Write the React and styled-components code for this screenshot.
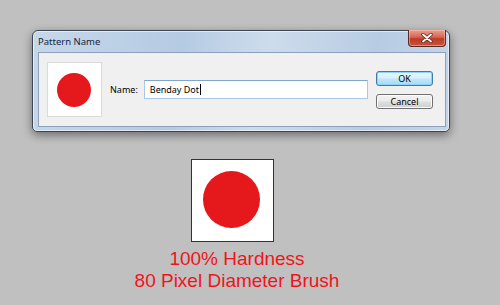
import styled, { createGlobalStyle } from "styled-components";

const GlobalStyle = createGlobalStyle`
  html, body {
    margin: 0;
    padding: 0;
    background: #c0c0c0;
  }
`;

const Page = styled.div`
  width: 500px;
  height: 305px;
  display: flex;
  flex-direction: column;
  overflow: hidden;
`;

// dialog window
const Window = styled.div`
  box-sizing: border-box;
  margin: 30px 0 0 32px;
  width: 418px;
  height: 102px;
  display: flex;
  flex-direction: column;
  padding: 0 3px 4px 5px;
  border: 1px solid #3d4550;
  border-radius: 6px 6px 5px 5px;
  background: linear-gradient(100deg, #c6d7ea 0%, #b5cbe3 35%, #cddcec 55%, #b7cce3 80%, #c3d5e9 100%);
  box-shadow: 0 3px 10px rgba(0, 0, 0, 0.45), inset 0 0 0 1px rgba(255, 255, 255, 0.55);
`;

const TitleBar = styled.div`
  height: 21px;
  display: flex;
  justify-content: space-between;
  align-items: flex-start;
`;

const Title = styled.span`
  margin: 5px 0 0 0;
  font-family: "Noto Sans", sans-serif;
  font-size: 9.5px;
  line-height: 12px;
  color: #16263c;
`;

const CloseButton = styled.div`
  box-sizing: border-box;
  width: 38px;
  height: 17px;
  margin-top: -1px;
  display: flex;
  align-items: center;
  justify-content: center;
  border: 1px solid #5b2a24;
  border-top: none;
  border-radius: 0 0 4px 4px;
  background: linear-gradient(180deg, #e9a292 0%, #d5644f 45%, #bf3a25 55%, #c9543d 100%);
  box-shadow: inset 0 0 0 1px rgba(255, 200, 190, 0.5);
`;

const Client = styled.div`
  flex: 1;
  display: flex;
  align-items: center;
  padding: 0 12px 0 8px;
  background: #f0f0f0;
  border: 1px solid #8da2ba;
`;

const Swatch = styled.div`
  box-sizing: border-box;
  width: ${(p) => p.$size}px;
  height: ${(p) => p.$size}px;
  display: flex;
  align-items: center;
  justify-content: center;
  background: #fff;
  border: ${(p) => p.$border};
`;

const Dot = styled.div`
  width: ${(p) => p.$d}px;
  height: ${(p) => p.$d}px;
  border-radius: 50%;
  background: #e5191c;
  margin: ${(p) => p.$offset || "0"};
`;

const NameRow = styled.div`
  flex: 1;
  display: flex;
  align-items: center;
  gap: 6px;
  margin: 0 8px;
`;

const Label = styled.label`
  font-family: "Noto Sans", sans-serif;
  font-size: 9px;
  color: #000;
`;

const Input = styled.div`
  box-sizing: border-box;
  flex: 1;
  height: 19px;
  display: flex;
  align-items: center;
  padding-left: 5px;
  background: #fff;
  border: 1px solid #a9c7e6;
  border-top-color: #7fa6cf;
  font-family: "Noto Sans", sans-serif;
  font-size: 9px;
  color: #000;
`;

const Caret = styled.span`
  display: inline-block;
  width: 1px;
  height: 11px;
  margin-left: 1px;
  background: #000;
`;

const Buttons = styled.div`
  display: flex;
  flex-direction: column;
  gap: 8px;
  margin-top: 1px;
`;

const Button = styled.button`
  box-sizing: border-box;
  width: 57px;
  height: 15px;
  padding: 0;
  font-family: "Noto Sans", sans-serif;
  font-size: 9px;
  line-height: 12px;
  color: #000;
  border-radius: 3px;
  border: 1px solid ${(p) => (p.$primary ? "#3d7bad" : "#707070")};
  background: ${(p) =>
    p.$primary
      ? "linear-gradient(180deg, #eaf6fd 0%, #d9f0fc 45%, #bee6fd 55%, #a7d9f5 100%)"
      : "linear-gradient(180deg, #f2f2f2 0%, #ebebeb 45%, #dddddd 55%, #cfcfcf 100%)"};
  box-shadow: inset 0 0 0 1px ${(p) => (p.$primary ? "#8fd3f8" : "#fcfcfc")};
`;

const Sample = styled.div`
  display: flex;
  flex-direction: column;
  align-items: center;
  width: 474px;
  margin-top: 27px;
`;

const SampleSwatch = styled(Swatch)`
  margin-right: 10px;
`;

const Caption = styled.div`
  margin-top: 6px;
  font-family: "Liberation Sans", Arial, sans-serif;
  font-size: 19px;
  line-height: 22px;
  color: #f0141c;
  text-align: center;
`;

const CloseIcon = () => (
  <svg width="12" height="10" viewBox="0 0 12 10">
    <path d="M2 1.5 L10 8.5 M10 1.5 L2 8.5" stroke="#5a2a24" strokeWidth="3.4" strokeLinecap="round" />
    <path d="M2 1.5 L10 8.5 M10 1.5 L2 8.5" stroke="#fff" strokeWidth="1.8" strokeLinecap="round" />
  </svg>
);

export default function App() {
  return (
    <Page>
      <GlobalStyle />
      <Window>
        <TitleBar>
          <Title>Pattern Name</Title>
          <CloseButton>
            <CloseIcon />
          </CloseButton>
        </TitleBar>
        <Client>
          <Swatch $size={55} $border="1px solid #dadada">
            <Dot $d={34} $offset="0 2px 0 0" />
          </Swatch>
          <NameRow>
            <Label>Name:</Label>
            <Input>
              Benday Dot<Caret />
            </Input>
          </NameRow>
          <Buttons>
            <Button $primary>OK</Button>
            <Button>Cancel</Button>
          </Buttons>
        </Client>
      </Window>
      <Sample>
        <SampleSwatch $size={83} $border="1px solid #333">
          <Dot $d={57} $offset="0 2px 2px 0" />
        </SampleSwatch>
        <Caption>
          100% Hardness
          <br />
          80 Pixel Diameter Brush
        </Caption>
      </Sample>
    </Page>
  );
}
